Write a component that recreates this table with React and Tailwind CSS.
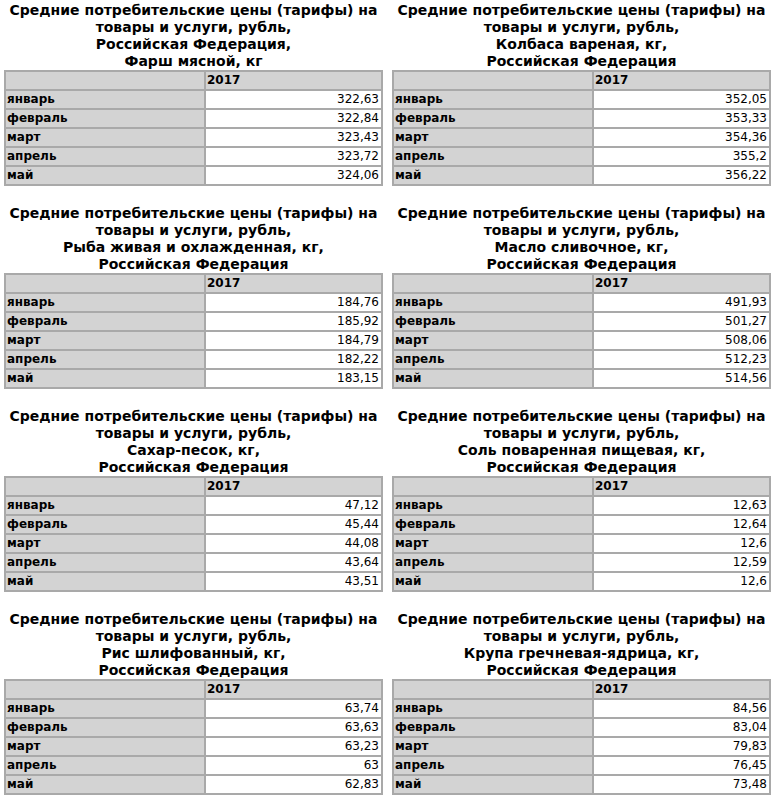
import React from 'react'

const months = ['январь', 'февраль', 'март', 'апрель', 'май']

const blocks = [
  { lines: ['товары и услуги, рубль,', 'Российская Федерация,', 'Фарш мясной, кг'], values: ['322,63', '322,84', '323,43', '323,72', '324,06'] },
  { lines: ['товары и услуги, рубль,', 'Колбаса вареная, кг,', 'Российская Федерация'], values: ['352,05', '353,33', '354,36', '355,2', '356,22'] },
  { lines: ['товары и услуги, рубль,', 'Рыба живая и охлажденная, кг,', 'Российская Федерация'], values: ['184,76', '185,92', '184,79', '182,22', '183,15'] },
  { lines: ['товары и услуги, рубль,', 'Масло сливочное, кг,', 'Российская Федерация'], values: ['491,93', '501,27', '508,06', '512,23', '514,56'] },
  { lines: ['товары и услуги, рубль,', 'Сахар-песок, кг,', 'Российская Федерация'], values: ['47,12', '45,44', '44,08', '43,64', '43,51'] },
  { lines: ['товары и услуги, рубль,', 'Соль поваренная пищевая, кг,', 'Российская Федерация'], values: ['12,63', '12,64', '12,6', '12,59', '12,6'] },
  { lines: ['товары и услуги, рубль,', 'Рис шлифованный, кг,', 'Российская Федерация'], values: ['63,74', '63,63', '63,23', '63', '62,83'] },
  { lines: ['товары и услуги, рубль,', 'Крупа гречневая-ядрица, кг,', 'Российская Федерация'], values: ['84,56', '83,04', '79,83', '76,45', '73,48'] },
]

function PriceTable({ lines, values }) {
  return (
    <div className="w-[379px]">
      <div className="h-[68px] text-center text-[14px] leading-[17px] font-bold text-black">
        <div className="whitespace-nowrap">Средние потребительские цены (тарифы) на</div>
        {lines.map((l) => (
          <div key={l} className="whitespace-nowrap">{l}</div>
        ))}
      </div>
      <table className="w-[379px] border-separate border-spacing-[2px] bg-[#a9a9a9] text-[12px] leading-[17px] text-black">
        <tbody>
          <tr className="h-[17px]">
            <td className="w-[198px] bg-[#d3d3d3] p-0"></td>
            <td className="bg-[#d3d3d3] px-[1px] py-0 font-bold">2017</td>
          </tr>
          {months.map((m, i) => (
            <tr key={m} className="h-[17px]">
              <td className="bg-[#d3d3d3] px-[1px] py-0 font-bold">{m}</td>
              <td className="bg-white px-[2px] py-0 text-right">{values[i]}</td>
            </tr>
          ))}
        </tbody>
      </table>
    </div>
  )
}

export default function App() {
  return (
    <div className="min-h-screen bg-white pt-[2px] pl-[4px]" style={{ fontFamily: '"DejaVu Sans", Verdana, sans-serif' }}>
      <div className="grid grid-cols-[379px_379px] gap-x-[9px] gap-y-[19px]">
        {blocks.map((b, i) => (
          <PriceTable key={i} lines={b.lines} values={b.values} />
        ))}
      </div>
    </div>
  )
}
